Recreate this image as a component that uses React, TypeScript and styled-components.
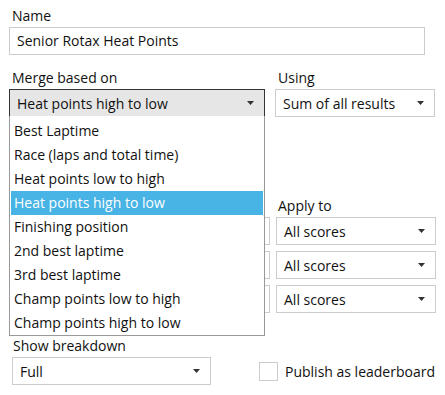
import React from "react";
import styled, { createGlobalStyle } from "styled-components";

const GlobalStyle = createGlobalStyle`
  body {
    margin: 0;
    background: #ffffff;
    font-family: "Open Sans", "Noto Sans", sans-serif;
    color: #111;
  }
`;

const mergeOptions = [
  "Best Laptime",
  "Race (laps and total time)",
  "Heat points low to high",
  "Heat points high to low",
  "Finishing position",
  "2nd best laptime",
  "3rd best laptime",
  "Champ points low to high",
  "Champ points high to low",
];

const Form = styled.div`
  width: 445px;
  height: 395px;
  padding: 6px 0 0 9px;
  box-sizing: border-box;
  font-size: 14px;
  overflow: hidden;
`;

const Label = styled.div`
  line-height: 20px;
  height: 20px;
  padding-left: 3px;
  margin-bottom: 1px;
  white-space: nowrap;
`;

const TextBox = styled.div`
  width: 416px;
  height: 28px;
  box-sizing: border-box;
  border: 1px solid #cccccc;
  padding: 0 7px;
  line-height: 26px;
`;

const Row = styled.div<{ $top?: number }>`
  display: flex;
  gap: 10px;
  margin-top: ${(p) => p.$top ?? 0}px;
`;

const Column = styled.div<{ $width: number; $indent?: number }>`
  width: ${(p) => p.$width}px;
  margin-left: ${(p) => p.$indent ?? 0}px;
  position: relative;
`;

const SelectBox = styled.div<{ $width: number; $open?: boolean }>`
  width: ${(p) => p.$width}px;
  height: 28px;
  box-sizing: border-box;
  border: 1px solid ${(p) => (p.$open ? "#333333" : "#cccccc")};
  background: ${(p) => (p.$open ? "#e6e6e6" : "#ffffff")};
  display: flex;
  align-items: center;
  justify-content: space-between;
  padding: 0 10px 0 7px;
  white-space: nowrap;
`;

const Arrow = () => (
  <svg width="7" height="4" viewBox="0 0 7 4">
    <path d="M0 0H7L3.5 4Z" fill="#333" />
  </svg>
);

const Select = ({
  value,
  width,
  open,
}: {
  value: string;
  width: number;
  open?: boolean;
}) => (
  <SelectBox $width={width} $open={open}>
    <span>{value}</span>
    <Arrow />
  </SelectBox>
);

const DropList = styled.div`
  position: absolute;
  top: 48px;
  left: 0;
  width: 256px;
  box-sizing: border-box;
  border: 1px solid #999999;
  border-top: none;
  background: #ffffff;
  padding: 3px 1px 0;
  z-index: 2;
`;

const Option = styled.div<{ $active?: boolean }>`
  height: 24px;
  line-height: 24px;
  padding-left: 3px;
  background: ${(p) => (p.$active ? "#48b3e5" : "transparent")};
  color: ${(p) => (p.$active ? "#ffffff" : "#111")};
  white-space: nowrap;
`;

const Stack = styled.div`
  display: flex;
  flex-direction: column;
  gap: 6px;
`;

const TieRow = styled.div`
  display: flex;
  gap: 6px;
  align-items: center;
`;

const BottomRow = styled.div`
  display: flex;
  align-items: flex-end;
  margin-top: 23px;
`;

const CheckRow = styled.label`
  display: flex;
  align-items: center;
  gap: 7px;
  margin: 0 0 4px 48px;
  white-space: nowrap;
`;

const Box = styled.span`
  width: 19px;
  height: 19px;
  box-sizing: border-box;
  border: 1px solid #cccccc;
`;

export default function App() {
  return (
    <>
      <GlobalStyle />
      <Form>
        <Label>Name</Label>
        <TextBox>Senior Rotax Heat Points</TextBox>

        <Row $top={13}>
          <Column $width={256}>
            <Label>Merge based on</Label>
            <Select value="Heat points high to low" width={256} open />
            <DropList>
              {mergeOptions.map((o) => (
                <Option key={o} $active={o === "Heat points high to low"}>
                  {o}
                </Option>
              ))}
            </DropList>
          </Column>
          <Column $width={160}>
            <Label>Using</Label>
            <Select value="Sum of all results" width={160} />
          </Column>
        </Row>

        <Row $top={79}>
          <Column $width={256} />
          <Column $width={160}>
            <Label>Apply to</Label>
          </Column>
        </Row>
        <Stack>
          {[0, 1, 2].map((i) => (
            <TieRow key={i}>
              <SelectBox $width={261} />
              <Select value="All scores" width={160} />
            </TieRow>
          ))}
        </Stack>

        <BottomRow>
          <Column $width={199} $indent={3}>
            <Label style={{ paddingLeft: 1 }}>Show breakdown</Label>
            <Select value="Full" width={199} />
          </Column>
          <CheckRow>
            <Box />
            Publish as leaderboard
          </CheckRow>
        </BottomRow>
      </Form>
    </>
  );
}
